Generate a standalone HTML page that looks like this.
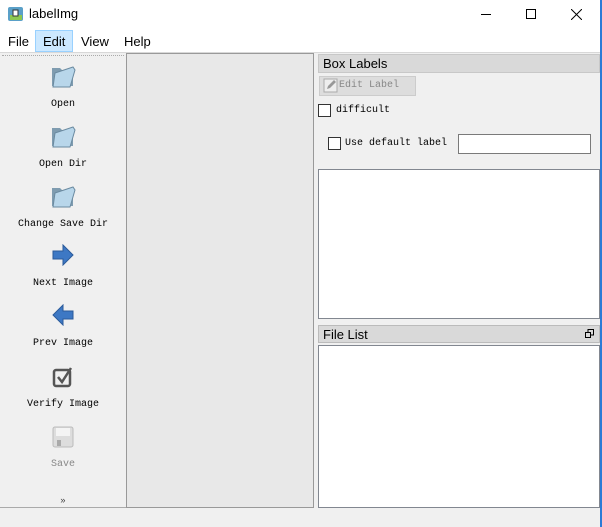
<!DOCTYPE html>
<html><head><style>
*{margin:0;padding:0;box-sizing:border-box}
body{width:602px;height:527px;background:#f0f0f0;position:relative;overflow:hidden;font-family:"Liberation Sans",sans-serif}
.abs{position:absolute}
.mono{font-family:"Liberation Mono","Noto Sans CJK SC",monospace;font-size:10px;color:#000}
.tb{position:absolute;left:0;width:126px;text-align:center}
</style></head><body>
<div class="abs" style="left:0;top:0;width:600px;height:52px;background:#fff"></div>
<div class="abs" style="left:600px;top:0;width:2px;height:527px;background:#2b7bd6"></div>
<svg class="abs" style="left:8px;top:6px" width="16" height="16"><rect x="0" y="1" width="15" height="14" rx="2" fill="#5aa0c8"/><rect x="2" y="9" width="12" height="5" fill="#8cc850"/><rect x="5" y="4" width="5" height="6" fill="#fff" stroke="#333" stroke-width="1"/></svg>
<div class="abs" style="left:29px;top:6px;font-size:13px;color:#000">labelImg</div>
<div class="abs" style="left:481px;top:14px;width:10px;height:1px;background:#000"></div>
<div class="abs" style="left:526px;top:9px;width:10px;height:10px;border:1px solid #000"></div>
<svg class="abs" style="left:571px;top:9px" width="11" height="11"><path d="M0 0L11 11M11 0L0 11" stroke="#000" stroke-width="1"/></svg>
<div class="abs" style="left:35px;top:30px;width:38px;height:22px;background:#cce8ff;border:1px solid #99d1ff"></div>
<div class="abs" style="left:8px;top:34px;font-size:13px">File</div>
<div class="abs" style="left:43px;top:34px;font-size:13px">Edit</div>
<div class="abs" style="left:81px;top:34px;font-size:13px">View</div>
<div class="abs" style="left:124px;top:34px;font-size:13px">Help</div>
<div class="abs" style="left:0;top:52px;width:600px;height:1px;background:#d8d8d8"></div>
<div class="abs" style="left:2px;top:55px;width:122px;height:1px;border-top:1px dotted #aaa"></div>
<svg class="abs" style="left:50px;top:63px" width="27" height="27"><path d="M2 5h8l2 2h11v16H2z" fill="#7f9cb0"/><path d="M5 10l18-6 2 3-5 17H3z" fill="#b8d6ea" stroke="#6a8aa0"/></svg>
<div class="tb mono" style="top:99px">Open</div>
<svg class="abs" style="left:50px;top:123px" width="27" height="27"><path d="M2 5h8l2 2h11v16H2z" fill="#7f9cb0"/><path d="M5 10l18-6 2 3-5 17H3z" fill="#b8d6ea" stroke="#6a8aa0"/></svg>
<div class="tb mono" style="top:159px">Open Dir</div>
<svg class="abs" style="left:50px;top:183px" width="27" height="27"><path d="M2 5h8l2 2h11v16H2z" fill="#7f9cb0"/><path d="M5 10l18-6 2 3-5 17H3z" fill="#b8d6ea" stroke="#6a8aa0"/></svg>
<div class="tb mono" style="top:219px">Change Save Dir</div>
<svg class="abs" style="left:52px;top:244px" width="22" height="22"><path d="M1 7h10V1l10 10-10 10v-6H1z" fill="#3d78c4" stroke="#2a5a9a"/></svg>
<div class="tb mono" style="top:278px">Next Image</div>
<svg class="abs" style="left:52px;top:304px" width="22" height="22"><path d="M21 7H11V1L1 11l10 10v-6h10z" fill="#3d78c4" stroke="#2a5a9a"/></svg>
<div class="tb mono" style="top:338px">Prev Image</div>
<svg class="abs" style="left:52px;top:366px" width="22" height="22"><rect x="2" y="4" width="16" height="16" rx="2" fill="none" stroke="#555" stroke-width="2.5"/><path d="M6 11l4 5 9-14" fill="none" stroke="#555" stroke-width="2.5"/></svg>
<div class="tb mono" style="top:399px">Verify Image</div>
<svg class="abs" style="left:52px;top:426px" width="22" height="22"><rect x="1" y="1" width="20" height="20" rx="2" fill="#ddd" stroke="#bbb"/><rect x="4" y="2" width="14" height="8" fill="#f4f4f4"/><rect x="5" y="14" width="4" height="6" fill="#aaa"/></svg>
<div class="tb mono" style="top:459px;color:#888">Save</div>
<div class="tb mono" style="top:496px;font-size:9px;color:#444">»</div>
<div class="abs" style="left:0;top:507px;width:127px;height:1px;background:#aaa"></div>
<div class="abs" style="left:126px;top:53px;width:188px;height:455px;background:#e8e8e8;border:1px solid #999"></div>
<div class="abs" style="left:318px;top:54px;width:282px;height:19px;background:#d9d9d9;border:1px solid #c8c8c8"></div>
<div class="abs" style="left:323px;top:56px;font-size:13px">Box Labels</div>
<div class="abs" style="left:319px;top:76px;width:97px;height:20px;background:#ddd;border:1px solid #ccc"></div>
<svg class="abs" style="left:323px;top:78px" width="15" height="15"><rect x="1" y="1" width="13" height="13" fill="#eee" stroke="#aaa"/><path d="M4 11l1-3 6-6 2 2-6 6z" fill="#999"/></svg>
<div class="abs mono" style="left:339px;top:80px;color:#888">Edit Label</div>
<div class="abs" style="left:318px;top:104px;width:13px;height:13px;background:#fff;border:1px solid #333"></div>
<div class="abs mono" style="left:336px;top:105px">difficult</div>
<div class="abs" style="left:328px;top:137px;width:13px;height:13px;background:#fff;border:1px solid #333"></div>
<div class="abs mono" style="left:345px;top:138px">Use default label</div>
<div class="abs" style="left:458px;top:134px;width:133px;height:20px;background:#fff;border:1px solid #7a7a7a"></div>
<div class="abs" style="left:318px;top:169px;width:282px;height:150px;background:#fff;border:1px solid #828790"></div>
<div class="abs" style="left:318px;top:325px;width:282px;height:18px;background:#d9d9d9;border:1px solid #bbb"></div>
<div class="abs" style="left:323px;top:327px;font-size:13px">File List</div>
<svg class="abs" style="left:585px;top:329px" width="9" height="9"><rect x="0.5" y="3.5" width="5" height="5" fill="none" stroke="#000"/><path d="M3 3V0.5h5.5V6H6" fill="none" stroke="#000"/></svg>
<div class="abs" style="left:318px;top:345px;width:282px;height:163px;background:#fff;border:1px solid #828790"></div>
</body></html>
